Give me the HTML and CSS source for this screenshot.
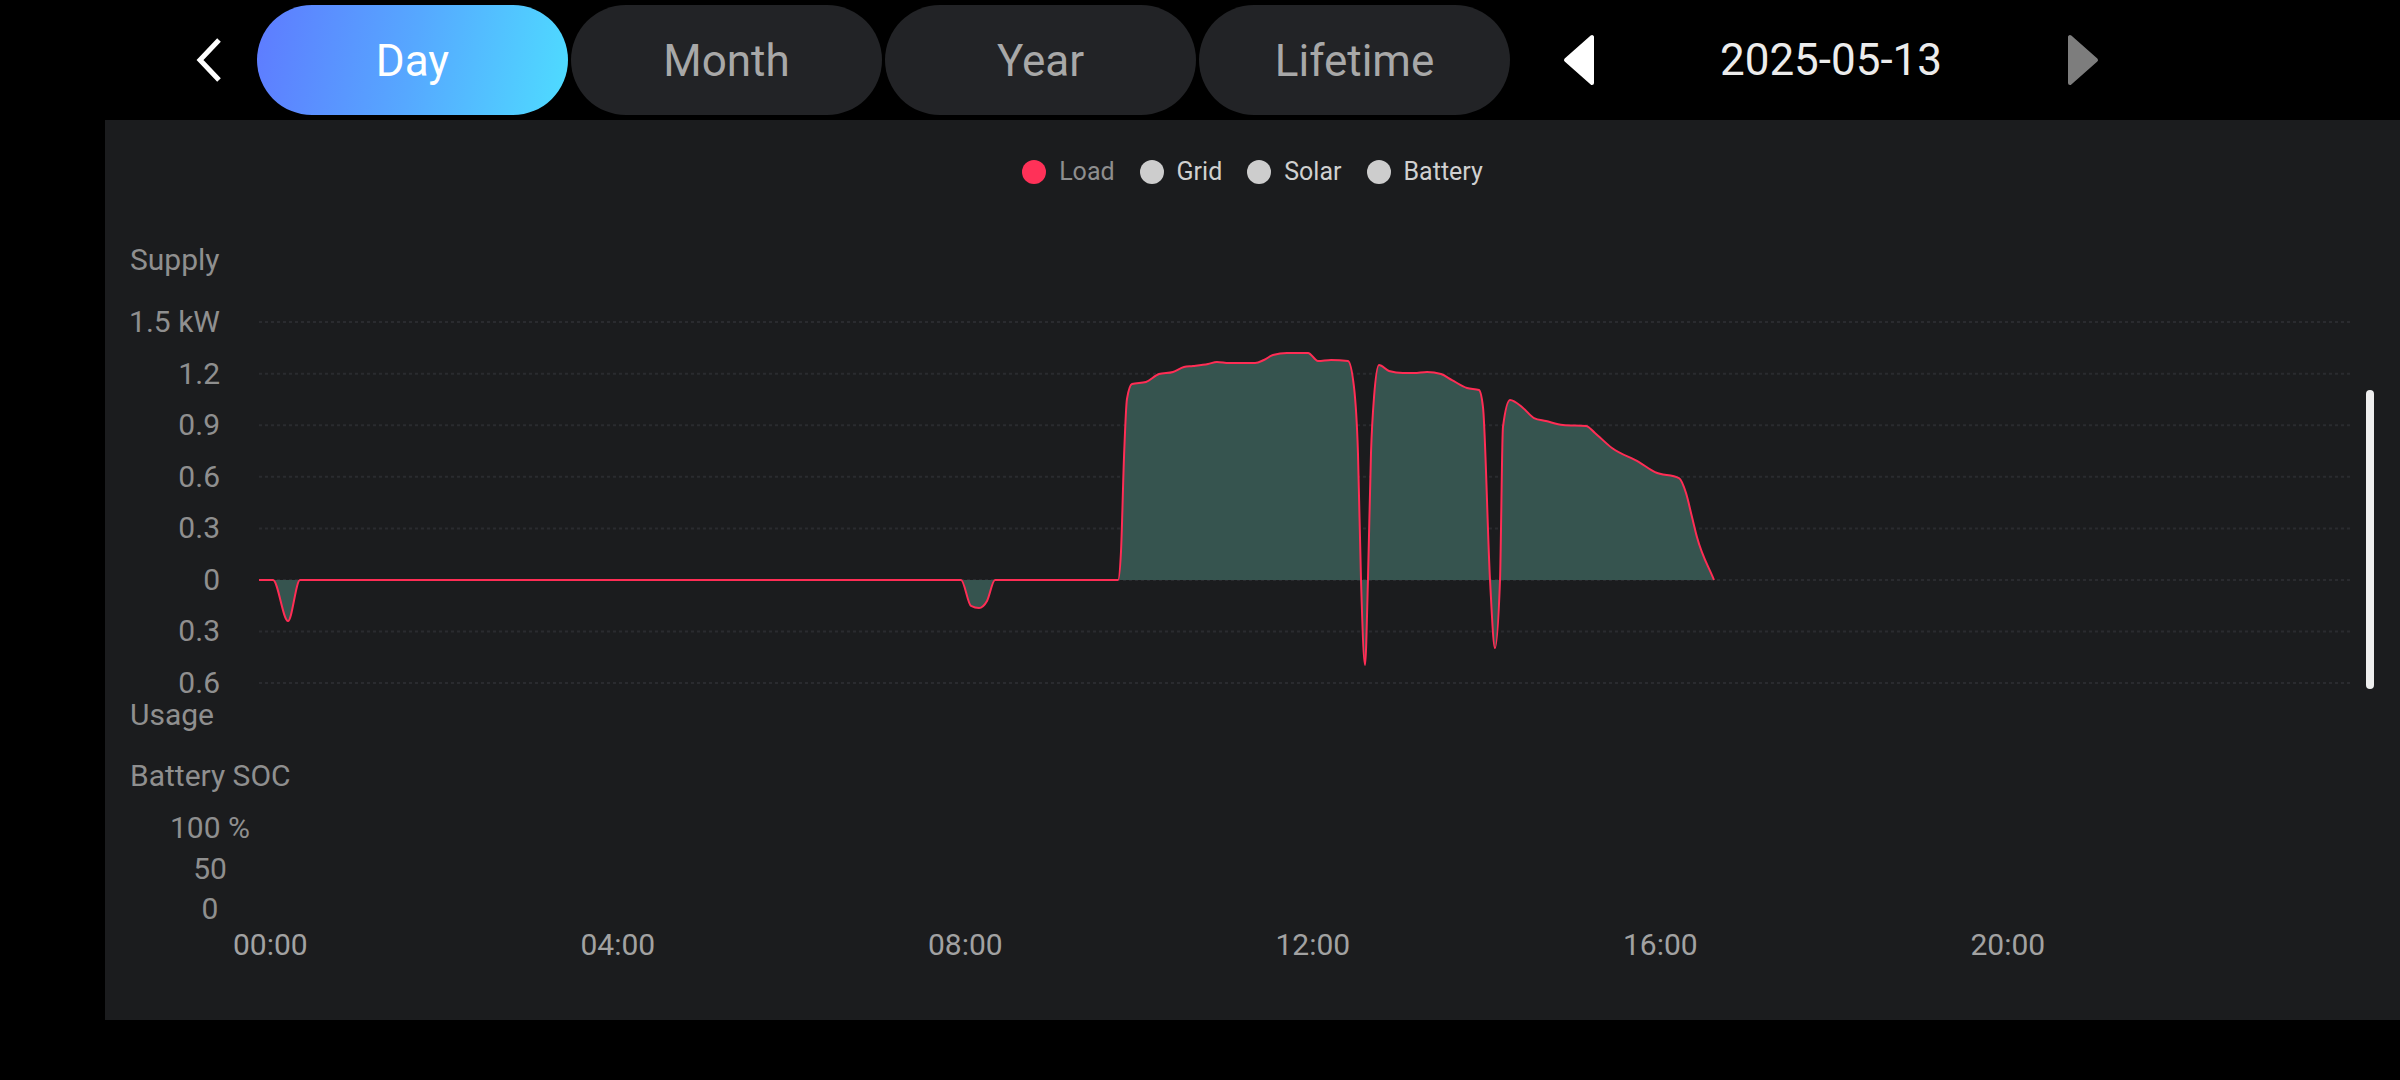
FILE: index.html
```html
<!DOCTYPE html>
<html lang="en">
<head>
    <meta charset="UTF-8">
    <meta name="viewport" content="width=device-width, initial-scale=1.0">
    <title>Energy - Day</title>
    <link rel="stylesheet" href="styles.css">
</head>
<body>
    <header class="topbar">
        <button class="back" aria-label="Back">
            <svg width="40" height="60" viewBox="0 0 40 60">
                <polyline points="30,10 11,30 30,50" fill="none" stroke="#fff" stroke-width="5"/>
            </svg>
        </button>
        <nav class="tabs">
            <button class="tab active">Day</button>
            <button class="tab">Month</button>
            <button class="tab">Year</button>
            <button class="tab">Lifetime</button>
        </nav>
        <div class="date-nav">
            <button class="arrow" aria-label="Previous day">
                <svg width="32" height="52" viewBox="0 0 32 52">
                    <path d="M29 3 L29 49 L3 26 Z" fill="#fff" stroke="#fff" stroke-width="4" stroke-linejoin="round"/>
                </svg>
            </button>
            <span class="date">2025-05-13</span>
            <button class="arrow" aria-label="Next day">
                <svg width="32" height="52" viewBox="0 0 32 52">
                    <path d="M3 3 L3 49 L29 26 Z" fill="#7d7d7d" stroke="#7d7d7d" stroke-width="4" stroke-linejoin="round"/>
                </svg>
            </button>
        </div>
    </header>

    <section class="panel">
        <ul class="legend">
            <li class="legend-item load"><span class="dot"></span>Load</li>
            <li class="legend-item"><span class="dot"></span>Grid</li>
            <li class="legend-item"><span class="dot"></span>Solar</li>
            <li class="legend-item"><span class="dot"></span>Battery</li>
        </ul>

        <div class="chart">
            <div class="axis-title">Supply</div>
            <div class="chart-row">
                <div class="ticks">
                    <span>1.5 kW</span>
                    <span>1.2</span>
                    <span>0.9</span>
                    <span>0.6</span>
                    <span>0.3</span>
                    <span>0</span>
                    <span>0.3</span>
                    <span>0.6</span>
                </div>
                <svg class="plot" width="2093" height="391" viewBox="0 0 2093 391">
                    <g class="grid">
                        <line x1="0" x2="2093" y1="15.1" y2="15.1"/>
                        <line x1="0" x2="2093" y1="66.7" y2="66.7"/>
                        <line x1="0" x2="2093" y1="118.2" y2="118.2"/>
                        <line x1="0" x2="2093" y1="169.8" y2="169.8"/>
                        <line x1="0" x2="2093" y1="221.4" y2="221.4"/>
                        <line x1="0" x2="2093" y1="273" y2="273"/>
                        <line x1="0" x2="2093" y1="324.6" y2="324.6"/>
                        <line x1="0" x2="2093" y1="376.1" y2="376.1"/>
                    </g>
                    <path id="loadArea" class="area"/>
                    <path id="loadLine" class="line"/>
                </svg>
            </div>
            <div class="axis-title usage">Usage</div>
            <div class="axis-title soc">Battery SOC</div>
            <div class="soc-ticks">
                <span>100 %</span>
                <span>50</span>
                <span>0</span>
            </div>
            <div class="times">
                <span>00:00</span>
                <span>04:00</span>
                <span>08:00</span>
                <span>12:00</span>
                <span>16:00</span>
                <span>20:00</span>
            </div>
        </div>

        <div class="scrollbar"></div>
    </section>

    <script>
        // load in kW, sampled by hour of day
        const load = [
            [0, 0], [0.161, 0], [0.334, -0.239], [0.472, 0],
            [8.081, 0], [8.196, -0.151], [8.288, -0.163], [8.38, -0.122], [8.472, 0],
            [9.888, 0], [9.922, 0.163], [9.957, 0.716], [9.991, 1.053], [10.049, 1.14],
            [10.21, 1.152], [10.36, 1.198], [10.521, 1.21], [10.647, 1.239], [10.751, 1.245],
            [10.924, 1.257], [11.027, 1.268], [11.165, 1.262], [11.465, 1.262], [11.568, 1.28],
            [11.672, 1.309], [11.833, 1.321], [12.075, 1.321], [12.19, 1.274], [12.34, 1.28],
            [12.535, 1.274], [12.604, 1.123], [12.65, 0.739], [12.685, 0], [12.731, -0.494],
            [12.765, 0], [12.8, 0.739], [12.835, 1.065], [12.892, 1.251], [13.007, 1.216],
            [13.168, 1.204], [13.295, 1.204], [13.445, 1.21], [13.606, 1.198], [13.732, 1.163],
            [13.905, 1.117], [14.043, 1.105], [14.089, 1.006], [14.17, 0], [14.227, -0.396],
            [14.285, 0], [14.319, 0.89], [14.4, 1.047], [14.55, 1.001], [14.676, 0.942],
            [14.814, 0.925], [15.01, 0.902], [15.275, 0.896], [15.378, 0.855], [15.574, 0.768],
            [15.885, 0.686], [16.069, 0.628], [16.345, 0.593], [16.426, 0.506], [16.495, 0.366],
            [16.552, 0.25], [16.748, 0]
        ];

        const pxPerHour = 86.875;
        const pxPerKw = 171.9;
        const zeroY = 273;

        const pts = load.map(([h, kw]) => [h * pxPerHour, zeroY - kw * pxPerKw]);

        // monotone cubic, so the curve never overshoots between samples
        function monotonePath(p) {
            const n = p.length;
            const slopes = [];
            for (let i = 0; i < n - 1; i++) {
                slopes.push((p[i + 1][1] - p[i][1]) / (p[i + 1][0] - p[i][0]));
            }
            const tangents = [slopes[0]];
            for (let i = 1; i < n - 1; i++) {
                const s0 = slopes[i - 1], s1 = slopes[i];
                if (s0 * s1 <= 0) {
                    tangents.push(0);
                    continue;
                }
                const h0 = p[i][0] - p[i - 1][0];
                const h1 = p[i + 1][0] - p[i][0];
                const mid = (s0 * h1 + s1 * h0) / (h0 + h1);
                tangents.push((Math.sign(s0) + Math.sign(s1)) * Math.min(Math.abs(s0), Math.abs(s1), 0.5 * Math.abs(mid)));
            }
            tangents.push(slopes[n - 2]);

            let d = `M${p[0][0]} ${p[0][1]}`;
            for (let i = 0; i < n - 1; i++) {
                const [x0, y0] = p[i];
                const [x1, y1] = p[i + 1];
                const dx = (x1 - x0) / 3;
                d += ` C${x0 + dx} ${y0 + dx * tangents[i]} ${x1 - dx} ${y1 - dx * tangents[i + 1]} ${x1} ${y1}`;
            }
            return d;
        }

        const curve = monotonePath(pts);
        const last = pts[pts.length - 1];
        document.getElementById('loadLine').setAttribute('d', curve);
        document.getElementById('loadArea').setAttribute('d', `${curve} L${last[0]} ${zeroY} L${pts[0][0]} ${zeroY} Z`);
    </script>
</body>
</html>
```

FILE: styles.css
```css
body {
    margin: 0;
    width: 2400px;
    height: 1080px;
    overflow: hidden;
    background-color: #000;
    font-family: Roboto, "Noto Sans", sans-serif;
    color: #fff;
}
button {
    background: none;
    border: none;
    padding: 0;
    margin: 0;
    font: inherit;
    color: inherit;
    cursor: pointer;
}

/* top bar */
.topbar {
    display: flex;
    align-items: center;
    height: 120px;
}
.back {
    display: flex;
    width: 40px;
    height: 60px;
    margin-left: 189px;
    margin-right: 28px;
}
.tabs {
    display: flex;
    gap: 3px;
}
.tab {
    width: 311px;
    height: 110px;
    padding-top: 2px;
    border-radius: 55px;
    background-color: #222326;
    color: #a8a8a8;
    font-size: 44px;
}
.tab.active {
    background: linear-gradient(100deg, #5e7bff 0%, #56a8ff 50%, #4edcff 100%);
    color: #fff;
}
.date-nav {
    display: flex;
    align-items: center;
    margin-left: 53px;
}
.arrow {
    display: flex;
    width: 32px;
    height: 52px;
}
.date {
    width: 472px;
    text-align: center;
    font-size: 44px;
    color: #ececec;
}

/* chart panel */
.panel {
    position: relative;
    box-sizing: border-box;
    margin-left: 105px;
    height: 900px;
    padding-top: 39px;
    background-color: #1b1c1e;
}
.legend {
    display: flex;
    justify-content: center;
    gap: 25px;
    margin: 0;
    padding: 0;
    list-style: none;
    font-size: 25px;
    line-height: 25px;
    color: #d0d0d0;
}
.legend-item {
    display: flex;
    align-items: center;
    gap: 13px;
}
.dot {
    width: 24px;
    height: 24px;
    border-radius: 50%;
    background-color: #cdcdcd;
}
.legend-item.load {
    color: #8e8e8e;
}
.legend-item.load .dot {
    background-color: #ff3158;
}

.chart {
    margin-top: 61px;
    font-size: 30px;
    color: #8f8f8f;
}
.axis-title {
    height: 30px;
    line-height: 30px;
    padding-left: 25px;
    white-space: nowrap;
}
.axis-title.usage {
    height: 34px;
    line-height: 34px;
}
.axis-title.soc {
    margin-top: 29px;
}
.chart-row {
    display: flex;
    margin-top: 32px;
}
.ticks {
    box-sizing: border-box;
    display: flex;
    flex-direction: column;
    justify-content: space-between;
    flex-shrink: 0;
    width: 154px;
    height: 391px;
    padding-right: 39px;
    text-align: right;
    line-height: 30px;
}
.plot {
    display: block;
    flex-shrink: 0;
}
.grid line {
    stroke: #2a2b2f;
    stroke-width: 2;
    stroke-dasharray: 3 3;
}
.area {
    fill: #36544f;
}
.line {
    fill: none;
    stroke: #ff2d55;
    stroke-width: 2;
}
.soc-ticks {
    display: flex;
    flex-direction: column;
    gap: 10.5px;
    width: 80px;
    margin-top: 22px;
    margin-left: 65px;
    text-align: center;
    line-height: 30px;
}
.times {
    display: flex;
    margin-top: 6px;
    padding-left: 128px;
    line-height: 30px;
    color: #a2a2a2;
}
.times span {
    width: 347.5px;
    flex-shrink: 0;
}
.scrollbar {
    position: absolute;
    top: 270px;
    right: 26px;
    width: 8px;
    height: 299px;
    border-radius: 4px;
    background-color: #eeeeee;
}
```
